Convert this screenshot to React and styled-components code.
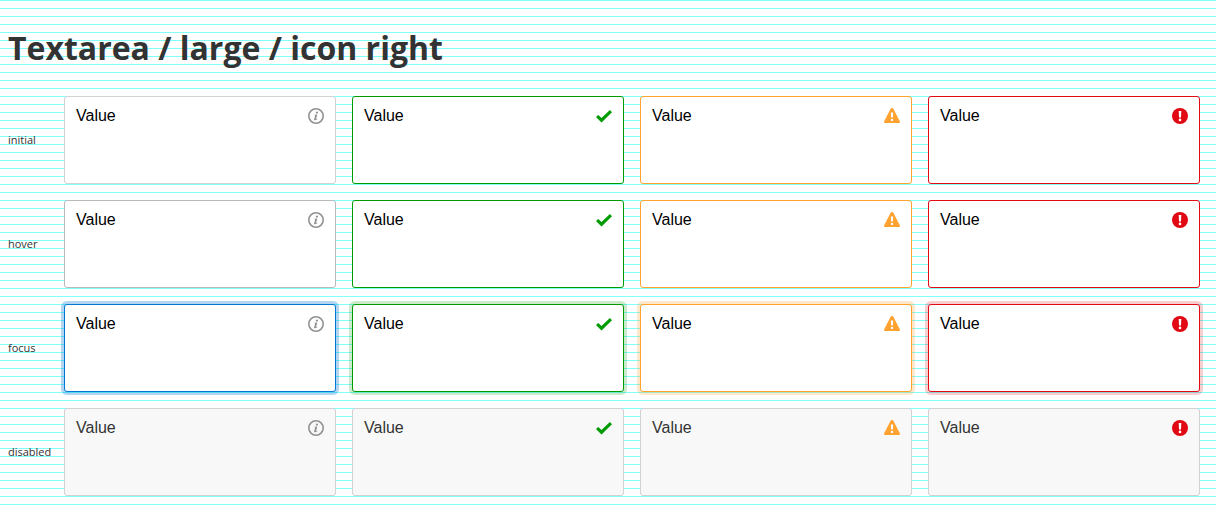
import React from "react";
import styled, { createGlobalStyle, css } from "styled-components";

const GlobalStyle = createGlobalStyle`
  *, *::before, *::after { box-sizing: border-box; }
  html { min-height: 100%; }
  body {
    margin: 0;
    color: #333;
    font-family: "Open Sans", sans-serif;
    background: #fff repeating-linear-gradient(to bottom, #80ffff 0, #80ffff 1px, transparent 1px, transparent 8px);
  }
`;

const Page = styled.main`
  padding: 24px 16px 16px 8px;
`;

const Title = styled.h1`
  margin: 0 0 24px;
  font-size: 32px;
  line-height: 48px;
  font-weight: 700;
`;

const Rows = styled.div`
  display: grid;
  gap: 16px;
`;

const Row = styled.section`
  display: grid;
  grid-template-columns: 40px repeat(4, minmax(0, 1fr));
  column-gap: 16px;
  align-items: center;
`;

const RowLabel = styled.h2`
  margin: 0;
  font-size: 11px;
  line-height: 16px;
  font-weight: 400;
  white-space: nowrap;
`;

const Field = styled.div`
  position: relative;
  display: flex;
`;

const borders = {
  info: { initial: "#d2d2d2", hover: "#b9b9b9", focus: "#0077d2" },
  success: { initial: "#009b00", hover: "#009b00", focus: "#009b00" },
  warning: { initial: "#ffa230", hover: "#ffa230", focus: "#ffa230" },
  error: { initial: "#e10a14", hover: "#e10a14", focus: "#e10a14" },
};

const rings = {
  info: "rgba(0, 119, 210, 0.3)",
  success: "rgba(0, 155, 0, 0.2)",
  warning: "rgba(255, 162, 48, 0.25)",
  error: "rgba(225, 10, 20, 0.2)",
};

const TextArea = styled.textarea`
  display: block;
  width: 100%;
  height: 88px;
  padding: 7px 43px 7px 11px;
  border: 1px solid ${(p) => borders[p.$kind][p.$state]};
  border-radius: 3px;
  outline: 0;
  resize: none;
  background: #fff;
  color: #000;
  font-family: "Liberation Sans", Arial, sans-serif;
  font-size: 16px;
  line-height: 24px;

  ${(p) =>
    p.$state === "focus" &&
    css`
      box-shadow: 0 0 0 3px ${rings[p.$kind]};
    `}

  &:disabled {
    border-color: #d2d2d2;
    background: #f8f8f8;
    color: #333;
  }
`;

const StatusIcon = styled.svg`
  position: absolute;
  top: 12px;
  right: 12px;
  width: 16px;
  height: 16px;
  pointer-events: none;
`;

function InfoIcon() {
  return (
    <StatusIcon viewBox="0 0 16 16" aria-hidden="true">
      <circle cx="8" cy="8" r="7.2" fill="none" stroke="#919191" strokeWidth="1.6" />
      <circle cx="8.9" cy="4.6" r="1.1" fill="#919191" />
      <path
        fill="#919191"
        d="M6 6.7 9.3 6.4 8.1 10.9c-.1.4.3.4 1.1-.1l.2.4c-.9.8-1.7 1.2-2.4 1.1-.8-.1-1-.7-.8-1.4l.9-3.3c.1-.4-.3-.5-1.2-.5z"
      />
    </StatusIcon>
  );
}

function SuccessIcon() {
  return (
    <StatusIcon viewBox="0 0 16 16" aria-hidden="true">
      <path fill="#009b00" d="M13.9 2.1 16 4.2 5.5 14.6 0 9.1 2.3 6.9l3.2 3.2z" />
    </StatusIcon>
  );
}

function WarningIcon() {
  return (
    <StatusIcon viewBox="0 0 16 16" aria-hidden="true">
      <path
        fill="#ffa230"
        d="M8 0c.6 0 1.1.3 1.4.8l6.4 12.5c.5 1-.1 1.7-1.2 1.7H1.4c-1.1 0-1.7-.7-1.2-1.7L6.6.8C6.9.3 7.4 0 8 0z"
      />
      <path fill="#fff" d="M6.8 4.4h2.4L8.9 9.6H7.1z" />
      <circle cx="8" cy="11.9" r="1.2" fill="#fff" />
    </StatusIcon>
  );
}

function ErrorIcon() {
  return (
    <StatusIcon viewBox="0 0 16 16" aria-hidden="true">
      <circle cx="8" cy="8" r="8" fill="#e10a14" />
      <path fill="#fff" d="M6.7 3h2.6L9 9.6H7z" />
      <circle cx="8" cy="11.9" r="1.3" fill="#fff" />
    </StatusIcon>
  );
}

const kinds = [
  ["info", InfoIcon],
  ["success", SuccessIcon],
  ["warning", WarningIcon],
  ["error", ErrorIcon],
];

const states = ["initial", "hover", "focus", "disabled"];

export default function App() {
  return (
    <>
      <GlobalStyle />
      <Page>
        <Title>Textarea / large / icon right</Title>
        <Rows>
          {states.map((state) => (
            <Row key={state} aria-labelledby={`state-${state}`}>
              <RowLabel id={`state-${state}`}>{state}</RowLabel>
              {kinds.map(([kind, Icon]) => (
                <Field key={kind}>
                  <TextArea
                    $kind={kind}
                    $state={state}
                    aria-labelledby={`state-${state}`}
                    disabled={state === "disabled"}
                    defaultValue="Value"
                  />
                  <Icon />
                </Field>
              ))}
            </Row>
          ))}
        </Rows>
      </Page>
    </>
  );
}
